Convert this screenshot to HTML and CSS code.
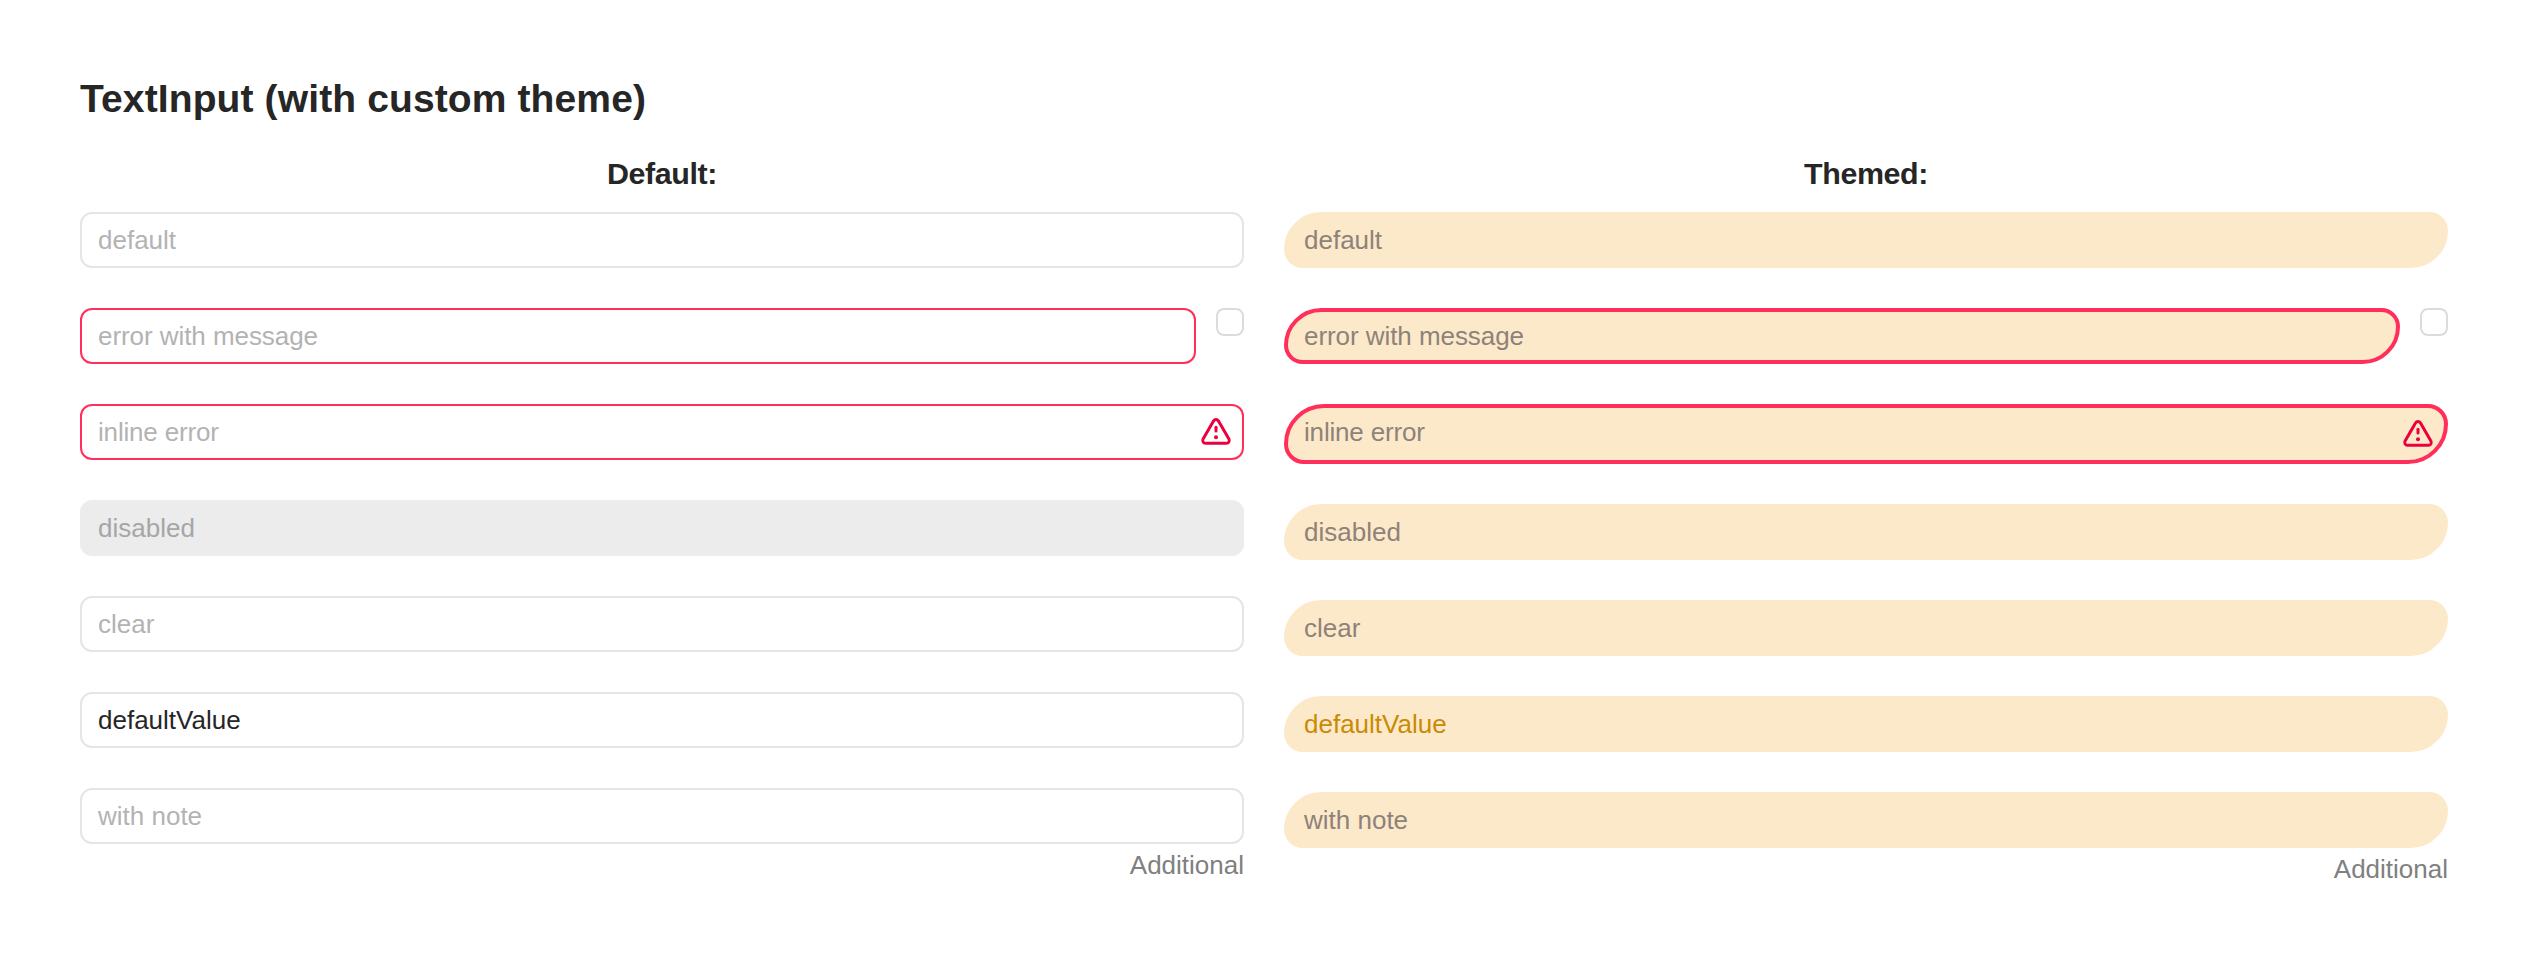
FILE: index.html
```html
<!DOCTYPE html>
<html lang="en">
<head>
<meta charset="utf-8">
<title>TextInput</title>
<link rel="stylesheet" href="styles.css">
</head>
<body>
<svg class="defs" aria-hidden="true">
  <symbol id="warning" viewBox="0 0 32 32">
    <path d="M13.5 5 3.1 22.9C2 25 3.2 27.3 5.5 27.3H26.5C28.8 27.3 30 25 28.9 22.9L18.5 5C17.3 3.1 14.7 3.1 13.5 5Z" fill="none" stroke="currentColor" stroke-width="3" stroke-linejoin="round"/>
    <path d="M16 11.3V15" fill="none" stroke="currentColor" stroke-width="3" stroke-linecap="round"/>
    <circle cx="16" cy="21.3" r="2" fill="currentColor"/>
  </symbol>
</svg>
<main class="page">
  <h1 class="title">TextInput (with custom theme)</h1>
  <div class="columns">
    <section class="column">
      <h2 class="heading">Default:</h2>
      <div class="fields">
        <div class="field"><span class="text">default</span></div>
        <div class="row"><div class="field error"><span class="text">error with message</span></div><span class="checkbox"></span></div>
        <div class="field error inline"><span class="text">inline error</span><svg class="icon"><use href="#warning"/></svg></div>
        <div class="field disabled"><span class="text">disabled</span></div>
        <div class="field"><span class="text">clear</span></div>
        <div class="field"><span class="text value">defaultValue</span></div>
        <div class="noted"><div class="field"><span class="text">with note</span></div><p class="note">Additional</p></div>
      </div>
    </section>
    <section class="column themed">
      <h2 class="heading">Themed:</h2>
      <div class="fields">
        <div class="field"><span class="text">default</span></div>
        <div class="row"><div class="field error"><span class="text">error with message</span></div><span class="checkbox"></span></div>
        <div class="field error inline"><span class="text">inline error</span><svg class="icon"><use href="#warning"/></svg></div>
        <div class="field"><span class="text">disabled</span></div>
        <div class="field"><span class="text">clear</span></div>
        <div class="field"><span class="text value">defaultValue</span></div>
        <div class="noted"><div class="field"><span class="text">with note</span></div><p class="note">Additional</p></div>
      </div>
    </section>
  </div>
</main>
</body>
</html>
```
FILE: styles.css
```css
* { box-sizing: border-box; margin: 0; }
body { background: #fff; color: #262626; font-family: "Liberation Sans", Arial, sans-serif; }
.defs { display: none; }
.page { padding: 72px 80px 0; }
.title { font-size: 39px; line-height: 53px; font-weight: 700; letter-spacing: 0.12px; }
.columns { display: grid; grid-template-columns: 1fr 1fr; gap: 40px; margin-top: 27px; }
.heading { height: 60px; font-size: 30.42px; line-height: 42px; font-weight: 700; letter-spacing: -0.4px; text-align: center; }
.fields { display: flex; flex-direction: column; gap: 40px; }
.field { display: flex; align-items: center; justify-content: space-between; height: 56px; padding: 0 10px 0 16px; border: 2px solid #e5e5e5; border-radius: 12px; flex: none; }
.row { display: flex; align-items: flex-start; gap: 20px; }
.row .field { flex: 1; }
.row .text { letter-spacing: -0.06px; }
.checkbox { width: 28px; height: 28px; border: 2px solid #dbdbdb; border-radius: 8px; }
.text { font-size: 26px; line-height: 36px; color: #b3b3b3; }
.inline .text { letter-spacing: -0.18px; }
.value { color: #262626; }
.error { border-color: #ff2e5b; }
.disabled { background: #ececec; border-color: #ececec; }
.disabled .text { color: #a6a6a6; }
.icon { width: 32px; height: 32px; color: #ea003c; }
.note { margin-top: 3px; font-size: 26px; line-height: 36px; text-align: right; color: #808080; }
.themed .field { padding: 0 10px 0 16px; border: 4px solid #fce9ca; background: #fce9ca; border-radius: 40px 20px; }
.themed .error { border-color: #ff2e5b; }
.themed .inline { height: 60px; }
.themed .inline .text { margin-bottom: 4px; }
.themed .text { color: #8e8279; }
.themed .value { color: #ca8a04; }
```
